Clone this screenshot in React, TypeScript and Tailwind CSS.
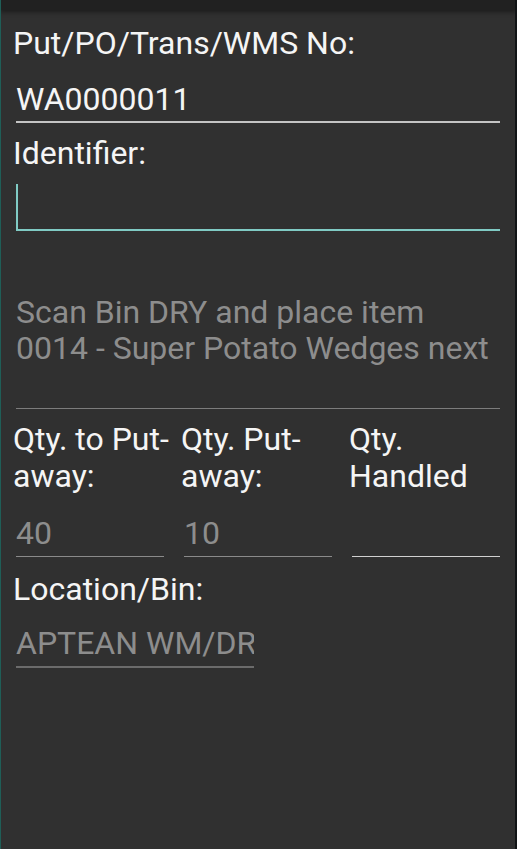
import React from "react";

const font = { fontFamily: "Roboto, 'Noto Sans', sans-serif" };

function QtyField({ label, value, last }: { label: string; value: string; last?: boolean }) {
    return (
        <div className="flex flex-col">
            <div className="text-[32px] leading-[37px] text-[#f5f5f5] h-[74px] whitespace-pre-line">{label}</div>
            <div
                className={`mt-[20px] ml-[3px] pb-[5px] border-b ${last ? "mr-[4px] border-[#d0d0d0]" : "mr-[17px] border-[#8a8a8a]"}`}
            >
                <div className="text-[32px] leading-[36px] h-[36px] text-[#8d8d8d]">{value}</div>
            </div>
        </div>
    );
}

export default function App() {
    return (
        <div className="w-[517px] h-[849px] bg-[#303030] relative overflow-hidden" style={font}>
            {/* left accent + right frame edge */}
            <div className="absolute left-0 top-0 bottom-0 w-px bg-[#1f5e57]" />
            <div className="absolute right-0 top-0 bottom-0 w-[2px] bg-[#111416]" />

            {/* top bar */}
            <div className="h-[10px] bg-[#212121] shadow-[0_2px_5px_rgba(0,0,0,0.45)]" />

            <div className="pl-[13px] pr-[13px]">
                <div className="mt-[15px] text-[32px] leading-[36px] text-[#f5f5f5]">Put/PO/Trans/WMS No:</div>
                <div className="mt-5 ml-[3px] mr-[4px] pb-[4px] border-b-2 border-[#c4c4c4]">
                    <div className="text-[32px] leading-[36px] text-[#f5f5f5]">WA0000011</div>
                </div>

                <div className="mt-[12px] text-[32px] leading-[36px] text-[#f5f5f5]">Identifier:</div>
                <div className="mt-0 pt-[13px] ml-[3px] mr-[4px] border-b-2 border-[#80cbc4]">
                    <div className="w-[2px] h-[45px] bg-[#80cbc4]" />
                </div>

                {/* instruction */}
                <div className="mt-[63px] ml-[3px] mr-[4px] pb-[42px] border-b border-[#7c7c7c]">
                    <div className="text-[32px] leading-[36px] text-[#8d8d8d]">
                        Scan Bin DRY and place item
                        <br />
                        0014 - Super Potato Wedges next
                    </div>
                </div>

                <div className="mt-[12px] grid grid-cols-[168px_168px_1fr]">
                    <QtyField label={"Qty. to Put-\naway:"} value="40" />
                    <QtyField label={"Qty. Put-\naway:"} value="10" />
                    <QtyField label={"Qty.\nHandled"} value="" last />
                </div>

                <div className="mt-[14px] text-[32px] leading-[36px] text-[#f5f5f5]">Location/Bin:</div>
                <div className="mt-[18px] ml-[3px] w-[238px] pb-[5px] border-b-2 border-[#6b6b6b]">
                    <div className="text-[32px] leading-[36px] text-[#8d8d8d] whitespace-nowrap overflow-hidden">
                        APTEAN WM/DRY
                    </div>
                </div>
            </div>
        </div>
    );
}
